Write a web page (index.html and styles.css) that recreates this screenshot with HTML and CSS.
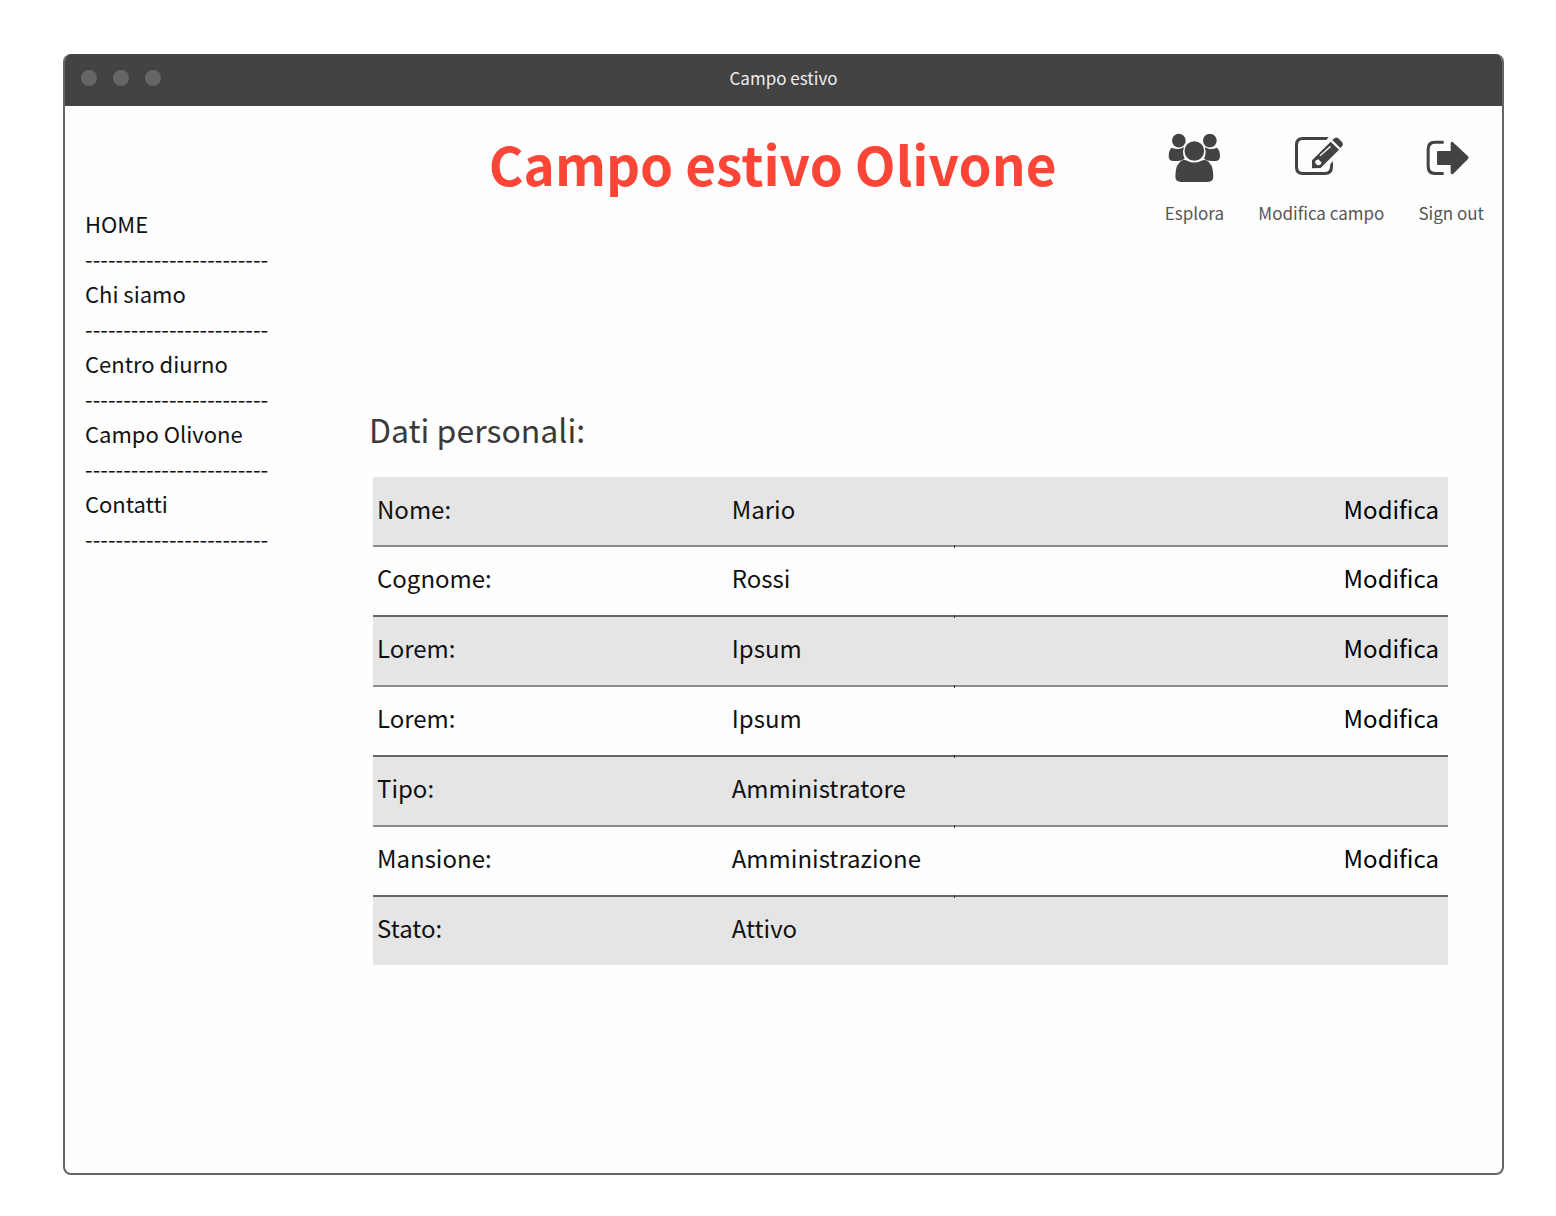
FILE: index.html
```html
<!DOCTYPE html>
<html lang="it">
<head>
<meta charset="utf-8">
<meta name="viewport" content="width=device-width, initial-scale=1">
<title>Campo estivo</title>
<link rel="stylesheet" href="styles.css">
</head>
<body>
<div class="window">
  <header class="titlebar">
    <div class="dots"><span class="dot"></span><span class="dot"></span><span class="dot"></span></div>
    <div class="window-title">Campo estivo</div>
  </header>
  <div class="content">
    <nav class="sidebar">
      <a href="#">HOME</a>
      <span class="rule" aria-hidden="true">------------------------</span>
      <a href="#">Chi siamo</a>
      <span class="rule" aria-hidden="true">------------------------</span>
      <a href="#">Centro diurno</a>
      <span class="rule" aria-hidden="true">------------------------</span>
      <a href="#">Campo Olivone</a>
      <span class="rule" aria-hidden="true">------------------------</span>
      <a href="#">Contatti</a>
      <span class="rule" aria-hidden="true">------------------------</span>
    </nav>
    <main class="main">
      <div class="top">
        <h1 class="title">Campo estivo Olivone</h1>
        <div class="actions">
          <a class="action" href="#">
            <svg class="icon" viewBox="70 279 180 150" aria-hidden="true">
              <circle cx="114.500" cy="302" r="20.500"/>
              <circle cx="207.500" cy="302" r="20.500"/>
              <path d="M93 323 Q104 328 116 327 Q122 326 129 322 L131 324 Q125 333 128 345 Q130 351 132 356 Q124 363 110 363 L98 363 Q84 363 84 348 Q84 331 93 323Z"/>
              <path d="M229 323 Q218 328 206 327 Q200 326 193 322 L191 324 Q197 333 194 345 Q192 351 190 356 Q198 363 212 363 L224 363 Q238 363 238 348 Q238 331 229 323Z"/>
              <circle cx="161" cy="333" r="33" fill="#fefefe"/>
              <circle cx="161" cy="333" r="29.500"/>
              <path d="M127 360 Q134 359 140 362 Q160 373 182 362 Q188 359 195 360 Q218 369 218 409 Q218 426 201 426 L121 426 Q104 426 104 409 Q104 369 127 360Z"/>
            </svg>
            <span>Esplora</span>
          </a>
          <a class="action" href="#">
            <svg class="icon" viewBox="459 279 180 150" aria-hidden="true">
              <path d="M572 291 L565 300 L495 300 Q480 300 480 315 L480 382 Q480 396 495 396 L560 396 Q575 396 576 382 L577 372 L585 364 L585 382 Q585 405 561 405 L494 405 Q471 405 471 382 L471 315 Q471 291 494 291Z"/>
              <path d="M583 300 L590 294 Q595 291 600 294 L612 306 Q617 312 613 318 L607 324Z"/>
              <path fill-rule="evenodd" d="M578 305 L603 329 L548 384 L522 385 L522 361Z M576 318 L545 346 L547 349 L579 321Z M532 362 L541 358 L551 368 L546 375 L538 376 L532 370Z"/>
            </svg>
            <span>Modifica campo</span>
          </a>
          <a class="action" href="#">
            <svg class="icon" viewBox="843 279 180 150" aria-hidden="true">
              <path d="M911 302 L911 311 L886 311 Q869 311 869 328 L869 379 Q869 396 886 396 L911 396 L911 405 L884 405 Q860 405 860 380 L860 327 Q860 302 884 302Z"/>
              <path d="M894 333 L932 333 L932 310 Q933 303 939 307 L984 349 Q988 353 984 357 L940 401 Q933 405 932 398 L932 375 L894 375 Q891 375 891 371 L891 337 Q891 333 894 333Z"/>
            </svg>
            <span>Sign out</span>
          </a>
        </div>
      </div>
      <section>
        <h2 class="heading">Dati personali:</h2>
        <table class="data">
          <colgroup><col class="col-label"><col class="col-value"><col></colgroup>
          <tbody>
            <tr><th scope="row">Nome:</th><td>Mario</td><td class="edit"><a href="#">Modifica</a></td></tr>
            <tr><th scope="row">Cognome:</th><td>Rossi</td><td class="edit"><a href="#">Modifica</a></td></tr>
            <tr><th scope="row">Lorem:</th><td>Ipsum</td><td class="edit"><a href="#">Modifica</a></td></tr>
            <tr><th scope="row">Lorem:</th><td>Ipsum</td><td class="edit"><a href="#">Modifica</a></td></tr>
            <tr><th scope="row">Tipo:</th><td>Amministratore</td><td class="edit"></td></tr>
            <tr><th scope="row">Mansione:</th><td>Amministrazione</td><td class="edit"><a href="#">Modifica</a></td></tr>
            <tr><th scope="row">Stato:</th><td>Attivo</td><td class="edit"></td></tr>
          </tbody>
        </table>
      </section>
    </main>
  </div>
</div>
</body>
</html>
```
FILE: styles.css
```css
* { box-sizing: border-box; }

body {
  margin: 0;
  padding: 54px 52px 41px 63px;
  min-height: 100vh;
  display: flex;
  background: #fff;
  color: #111;
  font-family: "Noto Sans CJK SC", "Noto Sans", sans-serif;
}

a { color: inherit; text-decoration: none; }

.window {
  flex: 1;
  border: 2px solid #666;
  border-top: 0;
  border-radius: 8px;
  background: #fefefe;
  overflow: hidden;
}

.titlebar {
  display: grid;
  grid-template-columns: 1fr auto 1fr;
  align-items: center;
  height: 52px;
  margin: 0 -2px;
  padding: 0 18px 4px;
  background: #434343;
  color: #eee;
}

.dots { display: flex; gap: 16px; }
.dot { width: 16px; height: 16px; border-radius: 50%; background: #666; }
.window-title { font-size: 17px; line-height: 24px; }

.content {
  display: grid;
  grid-template-columns: 304px 1fr;
}

.sidebar {
  display: flex;
  flex-direction: column;
  padding: 100px 0 0 20px;
  font-size: 22px;
  line-height: 35px;
}

.main { padding: 27px 18px 0 0; }

.top {
  display: flex;
  height: 269px;
}

.title {
  flex: 1;
  margin: 0;
  padding-left: 12px;
  text-align: center;
  color: #fb4637;
  font-size: 53px;
  line-height: 60px;
  white-space: nowrap;
}

.actions { display: flex; gap: 34px; align-items: flex-start; }

.action {
  display: flex;
  flex-direction: column;
  align-items: center;
  gap: 18px;
  color: #555;
  font-size: 17px;
  line-height: 24px;
}

.icon { width: 60px; height: 50px; fill: #434343; }

.heading {
  margin: 0;
  height: 75px;
  color: #3a3a3a;
  font-size: 32px;
  font-weight: 400;
  line-height: 54px;
}

.data {
  width: calc(100% - 40px);
  margin-left: 4px;
  border-collapse: collapse;
  table-layout: fixed;
  font-size: 24px;
  line-height: 36px;
}

.col-label { width: 33%; }
.col-value { width: 21%; }

.data tr { --line: #666; height: 70px; }
.data tr:nth-child(even) { --line: #8c8c8c; }
.data tr:nth-child(odd) { background: #e5e5e5; }
.data tr:first-child { height: 68px; }

.data th, .data td {
  padding: 0 4px 4px;
  text-align: left;
  font-weight: 400;
}

.data .edit { padding-right: 9px; text-align: right; color: #000; }

/* row separators, with a small tick where the last column starts */
.data tr + tr > * {
  background: linear-gradient(var(--line), var(--line)) 0 0 / 100% 2px no-repeat;
}
.data tr + tr > .edit {
  background:
    linear-gradient(#333, #333) 0 0 / 1px 3px no-repeat,
    linear-gradient(var(--line), var(--line)) 0 0 / 100% 2px no-repeat;
}
```
